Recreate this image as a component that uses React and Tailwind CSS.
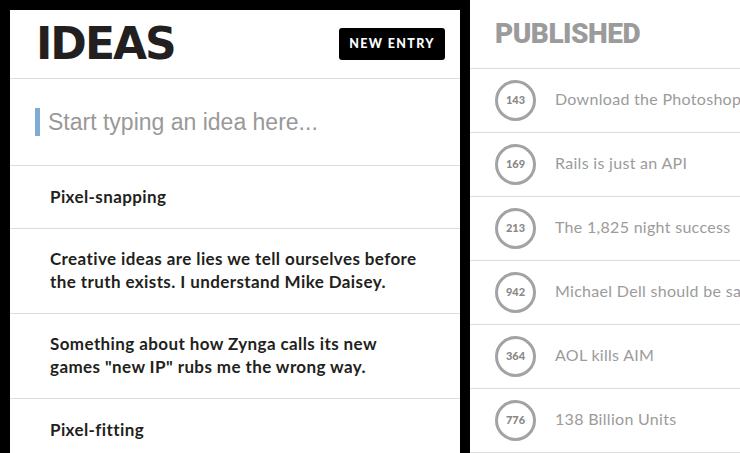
const ideas = [
  "Pixel-snapping",
  "Creative ideas are lies we tell ourselves before the truth exists. I understand Mike Daisey.",
  'Something about how Zynga calls its new games "new IP" rubs me the wrong way.',
  "Pixel-fitting",
];

const published = [
  { n: "143", title: "Download the Photoshop file" },
  { n: "169", title: "Rails is just an API" },
  { n: "213", title: "The 1,825 night success" },
  { n: "942", title: "Michael Dell should be sacked" },
  { n: "364", title: "AOL kills AIM" },
  { n: "776", title: "138 Billion Units" },
  { n: "512", title: "Pixel-snapping" },
];

export default function App() {
  return (
    <div className="flex h-[453px] w-[740px] overflow-hidden bg-black font-['Lato',sans-serif]">
      <section className="ml-[10px] mt-[10px] flex w-[450px] shrink-0 flex-col bg-white">
        <header className="flex h-[69px] shrink-0 items-center justify-between border-b border-[#dcdcdc] pl-[26px] pr-[15px]">
          <h1 className="font-['DejaVu_Sans',sans-serif] text-[44px] font-bold leading-none tracking-[-2px] text-[#231f20]">IDEAS</h1>
          <button className="h-[32px] rounded-[3px] bg-black px-[10px] text-[12.5px] font-black tracking-[1.4px] text-white">
            NEW ENTRY
          </button>
        </header>

        <div className="flex h-[87px] shrink-0 items-center border-b border-[#dcdcdc] pl-[25px]">
          <span className="h-[28px] w-[5px] bg-[#80acd4]" />
          <input
            className="ml-[8px] w-[390px] bg-transparent font-['Liberation_Sans',sans-serif] text-[23px] text-[#333] outline-none placeholder:text-[#999]"
            placeholder="Start typing an idea here..."
          />
        </div>

        {ideas.map((text, i) => (
          <div
            key={i}
            className="flex min-h-[63px] shrink-0 items-center border-b border-[#dcdcdc] pb-[20px] pt-[18px] pl-[40px] pr-[30px] text-[17px] font-bold leading-[23px] tracking-[0.4px] text-[#231f20]"
          >
            {text}
          </div>
        ))}
      </section>

      <section className="ml-[10px] flex flex-1 flex-col bg-white">
        <header className="flex h-[69px] shrink-0 items-center border-b border-[#dcdcdc] pl-[25px]">
          <h2 className="font-['Roboto',sans-serif] text-[28px] font-black leading-none tracking-[-0.5px] text-[#9b9b9b]">PUBLISHED</h2>
        </header>
        {published.map((p) => (
          <div
            key={p.n}
            className="flex h-[64px] shrink-0 items-center whitespace-nowrap border-b border-[#dcdcdc] pl-[25px]"
          >
            <div className="flex h-[41px] w-[41px] shrink-0 items-center justify-center rounded-full border-[3px] border-[#a3a3a3] text-[11px] font-black text-[#888]">
              {p.n}
            </div>
            <span className="mb-[3px] ml-[19px] text-[16px] tracking-[0.3px] text-[#9b9b9b]">{p.title}</span>
          </div>
        ))}
      </section>
    </div>
  );
}
